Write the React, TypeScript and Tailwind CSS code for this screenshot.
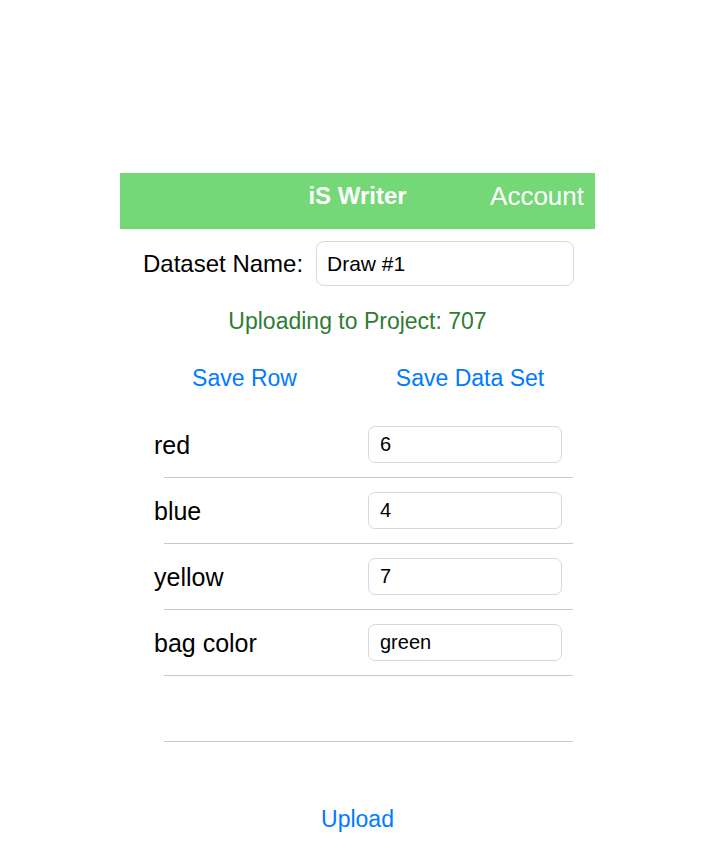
const rows = [
	{ label: "red", value: "6" },
	{ label: "blue", value: "4" },
	{ label: "yellow", value: "7" },
	{ label: "bag color", value: "green" },
];

function FieldRow({ label, value }: { label?: string; value?: string }) {
	return (
		<>
			<div className="flex h-[65px] items-center pl-[34px]">
				{label !== undefined && (
					<>
						<span className="w-[214px] text-[25px] leading-[30px] text-black">{label}</span>
						<input
							defaultValue={value}
							readOnly
							className="h-[37px] w-[194px] rounded-[7px] border border-[#d9d9d9] bg-white pl-[11px] text-[20px] text-black outline-none"
						/>
					</>
				)}
			</div>
			<div className="ml-[44px] h-px w-[409px] bg-[#c8c7cc]" />
		</>
	);
}

export default function App() {
	return (
		<div className="min-h-[864px] bg-white pt-[173px] font-['Liberation_Sans',Arial,sans-serif]">
			<div className="ml-[120px] w-[475px]">
				<header className="grid h-[56px] grid-cols-[1fr_auto_1fr] items-center bg-[#74d877] pb-[10px] text-white">
					<span />
					<h1 className="text-[24px] font-bold leading-[30px]">iS Writer</h1>
					<span className="justify-self-end pr-[11px] text-[26px] leading-[30px]">Account</span>
				</header>

				<section className="mt-[12px] flex items-center pl-[23px]">
					<label className="w-[173px] text-[24px] leading-[30px] text-black">Dataset Name:</label>
					<input
						defaultValue="Draw #1"
						readOnly
						className="h-[45px] w-[258px] rounded-[8px] border border-[#d9d9d9] bg-white pl-[10px] text-[21px] text-black outline-none"
					/>
				</section>

				<p className="mt-[21px] text-center text-[23px] leading-[28px] text-[#2f7d34]">Uploading to Project: 707</p>

				<div className="mt-[29px] flex gap-[24px] pl-[23px] text-[23px] leading-[28px] text-[#007aff]">
					<button className="w-[203px] text-center">Save Row</button>
					<button className="w-[200px] text-center">Save Data Set</button>
				</div>

				<section className="mt-[20px]">
					{rows.map((r) => (
						<FieldRow key={r.label} label={r.label} value={r.value} />
					))}
					<FieldRow />
				</section>

				<div className="mt-[63px] text-center">
					<button className="text-[23px] leading-[28px] text-[#007aff]">Upload</button>
				</div>
			</div>
		</div>
	);
}
